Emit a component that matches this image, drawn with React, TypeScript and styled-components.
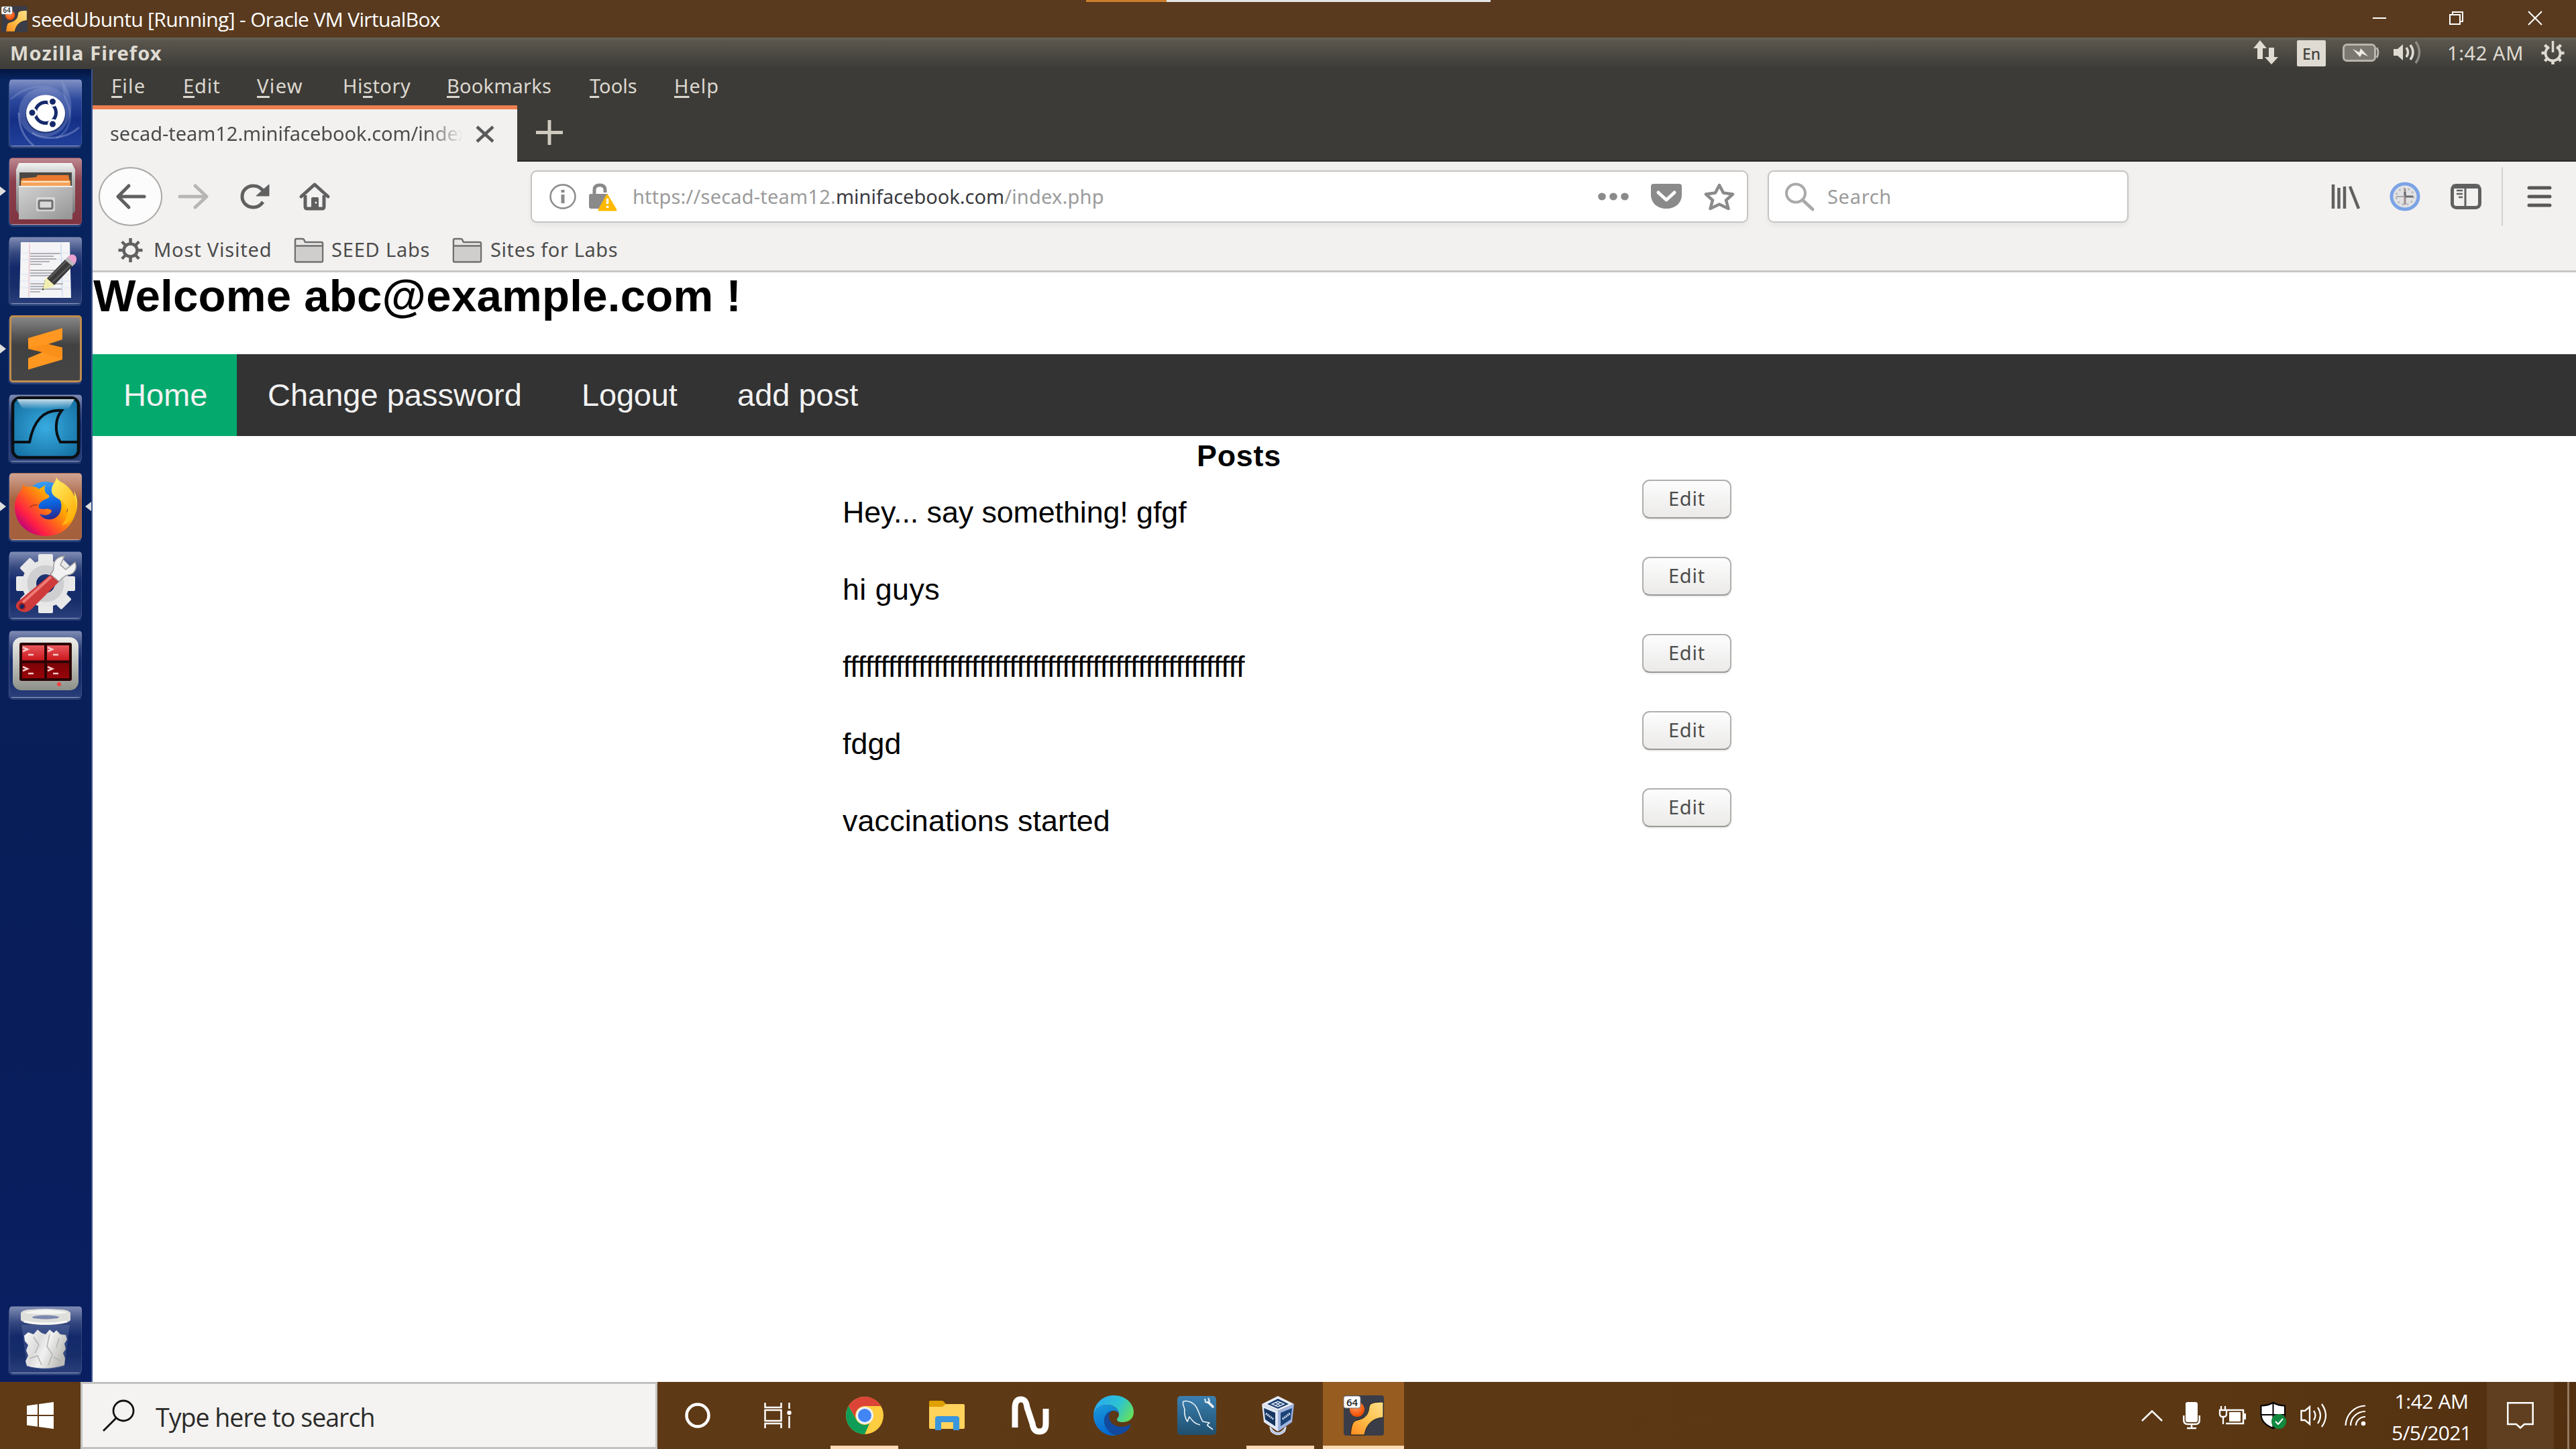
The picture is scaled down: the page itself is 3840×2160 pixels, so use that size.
import React from 'react';
import styled, { createGlobalStyle } from 'styled-components';

const uiFont = '"Noto Sans", "Open Sans", sans-serif';
const winFont = '"Open Sans", "Noto Sans", sans-serif';
const pageFont = '"Liberation Sans", Arial, sans-serif';

const GlobalStyle = createGlobalStyle`
  * { box-sizing: border-box; }
  body { margin: 0; background: #fff; overflow: hidden; }
  h1, ul, table { margin: 0; padding: 0; }
`;

const Screen = styled.div`
  width: 3840px;
  height: 2160px;
  display: flex;
  flex-direction: column;
  background: #fff;
`;

const Label = styled.span<{ $w?: number; $ls?: number; $ml?: number }>`
  flex: none;
  white-space: nowrap;
  ${p => (p.$w !== undefined ? `width: ${p.$w}px;` : '')}
  letter-spacing: ${p => p.$ls ?? 0}px;
  margin-left: ${p => p.$ml ?? 0}px;
`;

const Svg = styled.svg<{ $ml?: number }>`
  display: block;
  flex: none;
  overflow: visible;
  margin-left: ${p => p.$ml ?? 0}px;
`;

type IconProps = { w: number; h: number; ml?: number; children: React.ReactNode };
const Icon = ({ w, h, ml, children }: IconProps) => (
  <Svg width={w} height={h} viewBox={`0 0 ${w} ${h}`} $ml={ml} fill="none">
    {children}
  </Svg>
);

/* ---------- host window title bar ---------- */

const TitleBar = styled.header`
  position: relative;
  flex: none;
  height: 56px;
  display: flex;
  align-items: center;
  padding-left: 2px;
  background: #593a1e;
  color: #fff;
  font: 30px ${winFont};
`;

const TopMarker = styled.div`
  position: absolute;
  top: 0;
  left: 1619px;
  width: 603px;
  height: 3px;
  background: linear-gradient(90deg, #cb7f2b 120px, #e4e4e4 120px);
`;

const WindowControls = styled.div`
  margin-left: auto;
  display: flex;
  align-items: center;
  padding-right: 51px;
  padding-bottom: 2px;
`;

const BadgeText = styled.text`
  font-family: ${winFont};
  font-weight: 600;
`;

const MachineGlyph = ({ size, ml }: { size: number; ml?: number }) => (
  <Svg width={size} height={size} viewBox="0 0 60 60" $ml={ml} fill="none">
    <defs>
      <linearGradient id="yband" x1="0" y1="1" x2="1" y2="0">
        <stop offset="0" stopColor="#ff8a1c" />
        <stop offset="0.5" stopColor="#ffc14d" />
        <stop offset="1" stopColor="#ffe08a" />
      </linearGradient>
      <radialGradient id="yball" cx="0.4" cy="0.3" r="0.7">
        <stop offset="0" stopColor="#ff9a5c" />
        <stop offset="1" stopColor="#f04a00" />
      </radialGradient>
    </defs>
    <rect width="60" height="60" rx="4" fill="#3a3d47" />
    <circle cx="20" cy="21" r="11" fill="url(#yball)" />
    <path d="M10 59C12 46 12 39 20 37C34 34 37 27 38 17C39 11 46 10 59 10V33C45 34 34 41 31 59Z" fill="url(#yband)" stroke="#1d1d22" strokeWidth="1" />
    <rect x="0" y="1" width="25" height="18" rx="3" fill="#fff" stroke="#777" />
    <BadgeText x="4" y="16" fontSize="15" fill="#222">64</BadgeText>
  </Svg>
);

/* ---------- guest desktop ---------- */

const PanelBar = styled.div`
  flex: none;
  height: 47px;
  display: flex;
  align-items: center;
  padding: 0 16px 3px 15px;
  background: linear-gradient(#66635a, #5a564e 10%, #3f3e39 90%, #3c3b37);
  color: #dfdbd2;
  font: 29px ${uiFont};
`;

const PanelTitle = styled(Label)`
  font-weight: 700;
`;

const Indicators = styled.div`
  margin-left: auto;
  display: flex;
  align-items: center;
`;

const LangBadge = styled.span`
  width: 43px;
  height: 39px;
  margin: 3px 0 0 28px;
  display: flex;
  align-items: center;
  justify-content: center;
  background: #dfdbd2;
  color: #45433e;
  font-size: 23px;
  font-weight: 500;
  border-radius: 2px;
`;

const Desktop = styled.div`
  flex: none;
  height: 1957px;
  display: flex;
`;

const Launcher = styled.nav`
  flex: none;
  width: 138px;
  display: flex;
  flex-direction: column;
  gap: 17.4px;
  padding: 15px 0 13px;
  background: linear-gradient(#04143f, #082560 16px, #07205a 30%, #081d59 70%, #0a1f62);
  border-right: 2px solid #3d568f;
`;

const Slot = styled.div<{ $push?: boolean }>`
  flex: none;
  height: 100px;
  display: flex;
  align-items: center;
  margin-top: ${p => (p.$push ? 'auto' : '0')};
`;

const Tile = styled.div<{ $bg: string; $edge?: string }>`
  width: 108px;
  height: 100px;
  border-radius: 5px;
  background: ${p => p.$bg};
  border: ${p => (p.$edge ? `3px solid ${p.$edge}` : '1px solid rgba(255,255,255,.12)')};
  box-shadow: 0 4px 0 -1px rgba(170, 180, 220, .22), -4px 3px 0 -2px rgba(170, 180, 220, .14);
  display: flex;
  align-items: center;
  justify-content: center;
`;

const Gutter = styled.div<{ $w: number }>`
  flex: none;
  width: ${p => p.$w}px;
`;

const glass = 'linear-gradient(#7f8bb3, #34477f 24%, #13296a 45%, #172e6b 75%, #2a3f7a)';

const Art = ({ children }: { children: React.ReactNode }) => (
  <Svg width={108} height={100} viewBox="0 0 108 100" fill="none">{children}</Svg>
);

const UbuntuArt = () => (
  <Art>
    <path d="M2 30C30 5 70 5 84 30C98 55 88 80 70 88" stroke="#8fa3d8" strokeOpacity=".3" strokeWidth="3" />
    <path d="M78 2C102 32 92 62 78 76C48 100 14 78 14 50C14 22 40 8 60 14C84 20 86 40 84 52Z" fill="#a4b4e0" fillOpacity=".28" />
    <path d="M14 50C14 75 25 90 36 99M104 72C84 90 50 92 34 80" stroke="#a4b4e0" strokeOpacity=".4" strokeWidth="3" />
    <ellipse cx="54" cy="53" rx="30" ry="28" fill="#0d1f55" fillOpacity=".5" />
    <ellipse cx="54" cy="51" rx="29" ry="27.5" fill="#fff" />
    <circle cx="54" cy="50" r="15.500" stroke="#15296b" strokeWidth="5" />
    <g stroke="#fff" strokeWidth="3" fill="#15296b">
      <circle cx="34" cy="50" r="6" />
      <circle cx="64.500" cy="33.500" r="6" />
      <circle cx="64.500" cy="67" r="6" />
    </g>
  </Art>
);

const FilesArt = () => (
  <Art>
    <defs>
      <linearGradient id="cab" x1="0" y1="0" x2="0" y2="1">
        <stop offset="0" stopColor="#f3f3f3" />
        <stop offset="0.3" stopColor="#b9b9b9" />
        <stop offset="1" stopColor="#777" />
      </linearGradient>
      <linearGradient id="drawer" x1="0" y1="0" x2="1" y2="1">
        <stop offset="0" stopColor="#d2d2d2" />
        <stop offset="0.5" stopColor="#b4b4b4" />
        <stop offset="1" stopColor="#949494" />
      </linearGradient>
    </defs>
    <path d="M14 8H93L98 18V80L94 84H14L10 78V18Z" fill="url(#cab)" />
    <rect x="15" y="22" width="78" height="20" fill="#4b4844" />
    <path d="M18 31L40 29L42 26H88L91 42H17Z" fill="#e8792f" />
    <path d="M17 34H91V42H17Z" fill="#f5a35a" />
    <path d="M19 36H89" stroke="#fde3c4" strokeWidth="2" />
    <path d="M14 42H94V92H14Z" fill="url(#drawer)" />
    <path d="M14 43H94" stroke="#eee" strokeWidth="2" />
    <rect x="40" y="59" width="28" height="21" rx="2" fill="#dedede" fillOpacity=".8" />
    <rect x="44" y="64" width="20" height="12" rx="2" fill="#d8d8d8" stroke="#6e6e6e" strokeWidth="3" />
  </Art>
);

const EditorArt = () => (
  <Art>
    <path d="M17 8H90L92 91H15Z" fill="#f4f4f6" />
    <path d="M30 10L29 90" stroke="#eec3c8" strokeWidth="1.500" />
    <path d="M77 10L79 90" stroke="#cbdcf0" strokeWidth="1.500" />
    <path d="M18 24H90M18 34H90M17 56H90M17 66H90M16 76H90" stroke="#dbe4f2" strokeWidth="1" />
    <path d="M31 25H76M31 29H66M31 33H70M31 37H60M31 41H48M31 50H72M31 54H68M31 58H62M31 70H80M31 74H60M31 78H78M31 82H46" stroke="#b2b2b6" strokeWidth="2" />
    <path d="M49 80L53 64L62 72Z" fill="#22221c" />
    <path d="M53 64L57 60L69 71L63 75L52 78L50 77Z" fill="#f2eeb0" />
    <path d="M56 62L83 34L94 44L67 72Z" fill="#3a3a3a" />
    <path d="M59 62L86 35M64 68L91 42" stroke="#5e5e5e" strokeWidth="2" />
    <path d="M83 34L87 30L98 40L94 44Z" fill="#b8b8b8" />
    <path d="M87 30Q94 23 99 29Q102 35 97 41Z" fill="#eaa3d0" />
  </Art>
);

const SublimeArt = () => (
  <Art>
    <path d="M28 34L79 19V36L58 43L79 48V66L28 81V64L49 55L28 50Z" fill="#ff9720" />
    <path d="M58 43L79 48V66L49 55L28 50L34 48Z" fill="#f58a14" fillOpacity=".5" />
  </Art>
);

const SharkArt = () => (
  <Art>
    <defs>
      <radialGradient id="sea" cx="0.5" cy="0.5" r="0.6">
        <stop offset="0" stopColor="#38abe0" />
        <stop offset="1" stopColor="#1773a6" />
      </radialGradient>
      <linearGradient id="shine" x1="0" y1="0" x2="0" y2="1">
        <stop offset="0" stopColor="#fff" stopOpacity=".75" />
        <stop offset="1" stopColor="#fff" stopOpacity="0" />
      </linearGradient>
    </defs>
    <rect x="5" y="5" width="98" height="89" rx="11" fill="url(#sea)" stroke="#0a0f14" strokeWidth="4.500" />
    <path d="M11 7H97L88 22H20Z" fill="url(#shine)" />
    <path d="M5 71H30C36 40 50 22 78 24C68 36 67 56 76 71H103" stroke="#0a0f14" strokeWidth="4" />
  </Art>
);

const FirefoxArt = () => (
  <Art>
    <defs>
      <linearGradient id="fox" x1="0.95" y1="0.15" x2="0.1" y2="0.85">
        <stop offset="0" stopColor="#fff04a" />
        <stop offset="0.3" stopColor="#ffb300" />
        <stop offset="0.55" stopColor="#ff6a1a" />
        <stop offset="0.8" stopColor="#ff1f45" />
        <stop offset="1" stopColor="#b5007f" />
      </linearGradient>
      <linearGradient id="globe" x1="0.4" y1="0" x2="0.6" y2="1">
        <stop offset="0" stopColor="#3aa0f5" />
        <stop offset="0.55" stopColor="#0b62dd" />
        <stop offset="1" stopColor="#321a78" />
      </linearGradient>
      <linearGradient id="tail" x1="0" y1="0" x2="0.6" y2="1">
        <stop offset="0" stopColor="#fff36b" />
        <stop offset="1" stopColor="#ffb10a" />
      </linearGradient>
    </defs>
    <ellipse cx="54" cy="44" rx="32" ry="31" fill="url(#globe)" />
    <path d="M21 16C22 20 25 21 30 21C37 19 42 22 44 24L54 18C51 24 53 28 55 31C62 34 60 37 54 39C48 42 42 46 44 52C50 57 56 50 63 56C62 62 54 65 45 61C52 74 74 72 77 54C79 44 75 38 70 32C88 34 90 48 84 60C94 50 100 38 96 26C102 36 103 50 98 62C91 83 75 94 54 94C28 94 7 76 8 48C9 36 15 29 18 24Z" fill="url(#fox)" />
    <path d="M70 6C70 14 62 17 63 28C65 38 78 38 86 50C90 60 84 70 78 78C92 76 100 62 100 48C99 30 86 18 78 14C73 11 71 9 70 6Z" fill="url(#tail)" />
    <path d="M30 52C33 48 37 47 42 48" stroke="#c33e1a" strokeWidth="2" />
  </Art>
);

const cogTeeth = [0, 45, 90, 135, 180, 225, 270, 315];

const ToolsArt = () => (
  <Art>
    <g fill="#e9e9ea">
      {cogTeeth.map(a => (
        <rect key={a} x="43" y="4" width="22" height="20" rx="2" transform={`rotate(${a} 54 48)`} />
      ))}
    </g>
    <circle cx="54" cy="48" r="24.500" stroke="#e6e6e7" strokeWidth="21" />
    <circle cx="54" cy="48" r="21" stroke="#cfcfd1" strokeWidth="13" />
    <path d="M62 34L74 45L34 85C28 92 18 92 12 86C8 82 10 76 15 73Z" fill="#cf3a3a" />
    <path d="M62 38L20 76" stroke="#ee7b76" strokeWidth="4" />
    <circle cx="19" cy="82" r="4" fill="#15256a" stroke="#8d2020" strokeWidth="2" />
    <path d="M61 34C66 30 66 26 66 20C67 12 74 7 82 7L76 20L84 27L98 16C102 26 96 34 88 35C82 36 78 40 74 45Z" fill="#f2f2f2" stroke="#9b9b9b" strokeWidth="1.500" />
  </Art>
);

const TerminatorArt = () => (
  <Art>
    <defs>
      <linearGradient id="bezel" x1="0" y1="0" x2="0" y2="1">
        <stop offset="0" stopColor="#efefeb" />
        <stop offset="1" stopColor="#8d9088" />
      </linearGradient>
      <linearGradient id="red" x1="0" y1="0" x2="0" y2="1">
        <stop offset="0" stopColor="#e8585c" />
        <stop offset="0.5" stopColor="#c81016" />
        <stop offset="0.55" stopColor="#7c0307" />
        <stop offset="1" stopColor="#980409" />
      </linearGradient>
    </defs>
    <rect x="5" y="10" width="98" height="79" rx="13" fill="url(#bezel)" />
    <rect x="15" y="18" width="78" height="57" rx="3" fill="#2b0506" />
    <rect x="19" y="22" width="70" height="49" fill="url(#red)" />
    <path d="M54 20V73M17 46.500H91" stroke="#2b0506" strokeWidth="4" />
    <path d="M20 25L27 28L20 31M28 36H36M57 25L64 28L57 31M65 36H73M20 54L27 57L20 60M28 64H36M57 54L64 57L57 60M65 64H73" stroke="#f6c9c9" strokeWidth="2.500" />
    <circle cx="74" cy="80" r="3" fill="#f2403c" />
  </Art>
);

const TrashArt = () => (
  <Art>
    <defs>
      <linearGradient id="paper" x1="0" y1="0" x2="1" y2="0.4">
        <stop offset="0" stopColor="#fafafa" />
        <stop offset="0.4" stopColor="#dcdcdc" />
        <stop offset="0.6" stopColor="#f1f1f1" />
        <stop offset="1" stopColor="#bdbdb9" />
      </linearGradient>
    </defs>
    <path d="M18 28H90L82 90Q54 98 26 90Z" fill="#8c9bc8" fillOpacity=".25" />
    <path d="M22 44L28 39L36 42L42 35L48 40L54 42L60 35L66 40L70 36L76 42L84 43L86 50L82 56L84 64L80 70L83 78L82 88Q54 97 26 89L24 82L28 74L25 66L28 58L23 52Z" fill="url(#paper)" />
    <path d="M36 46L44 58L38 70M60 42L56 60L64 72L58 88M74 48L70 62M30 78L42 74L48 88M66 76L76 82" stroke="#b3b3b0" strokeWidth="1.500" />
    <path d="M17 10Q20 5 34 5Q54 3 74 5Q88 5 91 10V21Q84 28 54 28Q24 28 17 21Z" fill="#dededb" />
    <path d="M22 9Q54 2 86 9Q84 12 54 12Q24 12 22 9Z" fill="#f4f4f2" />
    <ellipse cx="54" cy="16.500" rx="20" ry="3" fill="#7d88b0" />
    <path d="M22 23Q54 29 86 23" stroke="#f7f7f5" strokeWidth="3" />
  </Art>
);

const LeftPip = () => (
  <Icon w={14} h={16}><path d="M0 1L9 8L0 15Z" fill="#dedede" /></Icon>
);
const RightPip = () => (
  <Icon w={9} h={16} ml={5}><path d="M9 1L0 8L9 15Z" fill="#dedede" /></Icon>
);

type LauncherApp = { name: string; bg: string; edge?: string; art: React.ReactNode; running?: boolean; focused?: boolean; bottom?: boolean };
const launcherApps: LauncherApp[] = [
  { name: 'dash', bg: 'linear-gradient(#7f90c4, #2c489c 30%, #142f85 60%, #21409a)', art: <UbuntuArt /> },
  { name: 'files', bg: 'linear-gradient(#bd8790, #8a3f4d 35%, #7f3441)', art: <FilesArt />, running: true },
  { name: 'gedit', bg: glass, art: <EditorArt /> },
  { name: 'sublime', bg: 'linear-gradient(#868686, #545454 30%, #414141 45%, #454545)', edge: '#c08d4e', art: <SublimeArt />, running: true },
  { name: 'wireshark', bg: glass, art: <SharkArt /> },
  { name: 'firefox', bg: 'linear-gradient(#cfa392, #a7623f 40%, #a4603c)', art: <FirefoxArt />, running: true, focused: true },
  { name: 'settings', bg: glass, art: <ToolsArt /> },
  { name: 'terminator', bg: glass, art: <TerminatorArt /> },
  { name: 'trash', bg: glass, art: <TrashArt />, bottom: true },
];

/* ---------- Firefox chrome ---------- */

const Browser = styled.div`
  flex: 1;
  min-width: 0;
  display: flex;
  flex-direction: column;
  background: #3c3b37;
  font: 29px ${uiFont};
`;

const MenuBar = styled.div`
  flex: none;
  height: 54px;
  display: flex;
  align-items: center;
  padding: 0 0 4px 28px;
  color: #dcd8cf;
`;

const MenuItem = styled(Label)`
  line-height: 1.2;
`;

const Mnemonic = styled.span`
  text-decoration: underline;
  text-decoration-thickness: 2.500px;
  text-underline-offset: 4px;
`;

const TabStrip = styled.div`
  flex: none;
  height: 84px;
  display: flex;
  align-items: center;
  border-bottom: 2px solid #2b2a27;
`;

const Tab = styled.div`
  height: 84px;
  align-self: flex-start;
  width: 633px;
  display: flex;
  align-items: center;
  padding: 0 34px 4px 26px;
  background: #f2f1f0;
  border-top: 6px solid #ee7f50;
  color: #4c4c4c;
`;

const TabTitle = styled.span`
  flex: none;
  width: 528px;
  padding-bottom: 3px;
  white-space: nowrap;
  letter-spacing: -.05px;
  -webkit-mask-image: linear-gradient(90deg, #000 470px, transparent 526px);
  mask-image: linear-gradient(90deg, #000 470px, transparent 526px);
`;

const NavBar = styled.div`
  flex: none;
  height: 104px;
  display: flex;
  align-items: center;
  padding-left: 9px;
  background: #f2f1f0;
`;

const BackButton = styled.div`
  width: 95px;
  height: 88px;
  border-radius: 50%;
  border: 2px solid #a9a8a6;
  background: #fcfcfc;
  display: flex;
  align-items: center;
  justify-content: center;
`;

const Field = styled.div<{ $w: number; $ml: number; $pl: number }>`
  flex: none;
  width: ${p => p.$w}px;
  height: 78px;
  margin-left: ${p => p.$ml}px;
  padding-left: ${p => p.$pl}px;
  display: flex;
  align-items: center;
  background: #fff;
  border: 2px solid #c6c4c2;
  border-radius: 9px;
  box-shadow: 0 4px 8px rgba(0, 0, 0, .05);
  color: #9b9b9b;
`;

const FieldText = styled(Label)`
  padding-bottom: 2px;
`;

const Host = styled.span`
  color: #3a3a40;
  letter-spacing: 0;
`;

const Divider = styled.div`
  width: 2px;
  height: 88px;
  margin-left: 30px;
  background: #d4d3d1;
`;

const BookmarksBar = styled.div`
  flex: none;
  height: 61px;
  display: flex;
  align-items: center;
  padding: 0 0 2px 37px;
  background: #f2f1f0;
  border-bottom: 3px solid #c9c7c5;
  color: #4c4c4c;
`;

const BookmarkText = styled(Label)`
  padding-bottom: 4px;
`;

const FolderIcon = ({ ml }: { ml: number }) => (
  <Icon w={45} h={38} ml={ml}>
    <path d="M2 35V4Q2 2 4 2H13Q15 2 16 5L17 7H41Q43 7 43 9V35Q43 36.500 41 36.500H4Q2 36.500 2 35Z" fill="#e8e7e6" stroke="#6f6f6f" strokeWidth="2.500" />
    <path d="M3 13H42V35H3Z" fill="#cfcecd" />
    <path d="M3 12.500H42" stroke="#6f6f6f" strokeWidth="2.500" />
  </Icon>
);

/* ---------- web page ---------- */

const Page = styled.main`
  flex: 1;
  min-height: 0;
  background: #fff;
  color: #000;
  font: 44.800px ${pageFont};
`;

const Welcome = styled.h1`
  height: 122px;
  line-height: 69px;
  font-size: 67.200px;
  font-weight: 700;
  padding-left: 1px;
  letter-spacing: .22px;
  white-space: nowrap;
`;

const TopNav = styled.div`
  height: 122px;
  display: flex;
  background: #333;
`;

const NavLink = styled.a<{ $w: number; $active?: boolean; $ls?: number }>`
  width: ${p => p.$w}px;
  padding-left: 46px;
  line-height: 121px;
  font-size: 47px;
  letter-spacing: ${p => p.$ls ?? 0}px;
  white-space: nowrap;
  color: #f2f2f2;
  background: ${p => (p.$active ? '#04aa6d' : 'transparent')};
`;

const Posts = styled.section`
  width: 1325px;
  margin-left: 1118px;
  padding-top: 1px;
`;

const PostsHeading = styled.div`
  width: 1182px;
  height: 64px;
  line-height: 56px;
  font-weight: 700;
  letter-spacing: .800px;
  text-align: center;
`;

const PostRow = styled.div`
  height: 114.900px;
  display: flex;
  justify-content: space-between;
`;

const PostText = styled.div<{ $ls: number }>`
  padding-top: 23px;
  line-height: 50px;
  letter-spacing: ${p => p.$ls}px;
`;

const EditButton = styled.button`
  width: 133px;
  height: 58px;
  padding: 0 0 3px;
  border: 2px solid #b1afac;
  border-bottom-color: #9b9996;
  border-radius: 11px;
  background: linear-gradient(#fdfdfd, #ebeae9);
  box-shadow: 0 2px 2px rgba(0, 0, 0, .08);
  color: #4c4c4c;
  font: 29px ${uiFont};
  letter-spacing: .8px;
`;

const posts = [
  { text: 'Hey... say something! gfgf', ls: -0.08 },
  { text: 'hi guys', ls: 0.45 },
  { text: 'f'.repeat(53), ls: -0.35 },
  { text: 'fdgd', ls: 0.1 },
  { text: 'vaccinations started', ls: 0.15 },
];

/* ---------- host taskbar ---------- */

const Taskbar = styled.footer`
  flex: none;
  height: 100px;
  display: flex;
  align-items: center;
  background: linear-gradient(90deg, #603a15, #5c3815 60%, #5b3713 85%, #523010);
  color: #fff;
  font: 30px ${winFont};
`;

const StartCell = styled.div`
  flex: none;
  width: 120px;
  display: flex;
  justify-content: center;
`;

const SearchBox = styled.div`
  flex: none;
  width: 860px;
  height: 100px;
  display: flex;
  align-items: center;
  padding-left: 29px;
  background: #f4f3f1;
  border: 3px solid #c3c2c0;
  color: #2b2b2b;
  font-size: 37.500px;
`;

const SearchText = styled(Label)`
  padding-top: 4px;
`;

const TaskCell = styled.div<{ $w?: number; $shift?: number; $state?: 'open' | 'active' }>`
  flex: none;
  width: ${p => p.$w ?? 121}px;
  height: 100px;
  display: flex;
  align-items: center;
  justify-content: center;
  padding-right: ${p => p.$shift ?? 0}px;
  background: ${p =>
    p.$state === 'active'
      ? 'linear-gradient(#965c20 95px, #ffd9b3 95px)'
      : p.$state === 'open'
        ? 'linear-gradient(#ffd9b3, #ffd9b3) center bottom / 101px 5px no-repeat'
        : 'transparent'};
`;

const Tray = styled.div`
  margin-left: auto;
  display: flex;
  align-items: center;
  height: 100px;
`;

const Clock = styled.div`
  width: 123px;
  margin-left: 36px;
  padding-top: 3px;
  display: flex;
  flex-direction: column;
  align-items: center;
  line-height: 47px;
  white-space: nowrap;
`;

const ActionCenter = styled.div`
  width: 100px;
  height: 100px;
  margin-left: 21px;
  display: flex;
  align-items: center;
  justify-content: center;
  background: #603f20;
`;

const ShowDesktop = styled.div`
  width: 13px;
  height: 100px;
  margin-left: 20px;
  border-left: 3px solid #937960;
`;

const BrowserMenu = () => (
  <MenuBar>
    <MenuItem $w={107} $ls={1.2}><Mnemonic>F</Mnemonic>ile</MenuItem>
    <MenuItem $w={110} $ls={0.9}><Mnemonic>E</Mnemonic>dit</MenuItem>
    <MenuItem $w={128} $ls={1.4}><Mnemonic>V</Mnemonic>iew</MenuItem>
    <MenuItem $w={155} $ls={0.5}>Hi<Mnemonic>s</Mnemonic>tory</MenuItem>
    <MenuItem $w={213} $ls={0.2}><Mnemonic>B</Mnemonic>ookmarks</MenuItem>
    <MenuItem $w={126} $ls={0}><Mnemonic>T</Mnemonic>ools</MenuItem>
    <MenuItem $ls={1}><Mnemonic>H</Mnemonic>elp</MenuItem>
  </MenuBar>
);

const BrowserNav = () => (
  <NavBar>
    <BackButton>
      <Icon w={46} h={38}><path d="M43 19H4M20 3L4 19L20 35" stroke="#606060" strokeWidth="5" strokeLinecap="round" strokeLinejoin="round" /></Icon>
    </BackButton>
    <Icon w={46} h={38} ml={24}><path d="M2 19H41M25 3L42 19L25 35" stroke="#b7b6b5" strokeWidth="5" strokeLinecap="round" strokeLinejoin="round" /></Icon>
    <Icon w={44} h={38} ml={46}>
      <path d="M34 27C30 33 26 35 20 35C10 35 3 28 3 19C3 10 10 3 20 3C28 3 33 8 36 13" stroke="#606060" strokeWidth="5" />
      <path d="M43 1V18H24Z" fill="#606060" stroke="#606060" strokeLinejoin="round" />
    </Icon>
    <Icon w={46} h={42} ml={44}>
      <path d="M3 21L23 3L43 21" stroke="#606060" strokeWidth="5" strokeLinecap="round" strokeLinejoin="round" />
      <path d="M9 19V36Q9 39 12 39H34Q37 39 37 36V19" stroke="#606060" strokeWidth="5" />
      <path d="M18 38V24Q18 22 20 22H27Q29 22 29 24V38Z" fill="#606060" />
      <circle cx="25" cy="30" r="1.500" fill="#f2f1f0" />
    </Icon>
    <Field $w={1815} $ml={299} $pl={26}>
      <Icon w={40} h={38}>
        <ellipse cx="20" cy="19" rx="18.500" ry="17.500" stroke="#8a8a8a" strokeWidth="2.500" />
        <path d="M20 16V29M20 9V13" stroke="#8a8a8a" strokeWidth="5" />
      </Icon>
      <Icon w={41} h={42} ml={19}>
        <path d="M8 18V11C8 6 11 4 16 4C21 4 24 6 24 11V15" stroke="#8a8a8a" strokeWidth="5" />
        <path d="M0 20Q0 17 3 17H28L20 39H3Q0 39 0 36Z" fill="#8a8a8a" />
        <path d="M27 19L40 41H15Z" fill="#ffb900" stroke="#ffb900" strokeWidth="3" strokeLinejoin="round" />
        <path d="M27.500 24V32M27.500 35V38" stroke="#fff" strokeWidth="3.500" />
      </Icon>
      <FieldText $ml={24} $w={1439} $ls={0.2}>https://secad-team12.<Host>minifacebook.com</Host>/index.php</FieldText>
      <Icon w={204} h={42}>
        <g fill="#8a8a8a">
          <ellipse cx="6" cy="21" rx="5.800" ry="5.500" />
          <ellipse cx="23" cy="21" rx="5.800" ry="5.500" />
          <ellipse cx="40" cy="21" rx="5.800" ry="5.500" />
          <path d="M79 6Q79 2 83 2H121Q125 2 125 6V18C125 31 115 39 102 39C89 39 79 31 79 18Z" />
        </g>
        <path d="M90 15L102 26L114 15" stroke="#fff" strokeWidth="5" strokeLinecap="round" strokeLinejoin="round" />
        <path d="M181 4L187 15.500L201 17.500L191 26.500L194.500 39L181 32.500L167.500 39L171 26.500L161 17.500L175 15.500Z" stroke="#8a8a8a" strokeWidth="4.500" strokeLinejoin="round" />
      </Icon>
    </Field>
    <Field $w={538} $ml={29} $pl={23}>
      <Icon w={45} h={42}>
        <ellipse cx="17" cy="16" rx="14" ry="13.500" stroke="#a9a9a9" strokeWidth="4" />
        <path d="M27 26L42 40" stroke="#a9a9a9" strokeWidth="5" strokeLinecap="round" />
      </Icon>
      <FieldText $ml={19} $ls={0.7}>Search</FieldText>
    </Field>
    <Icon w={44} h={38} ml={302}>
      <path d="M3 1V37M11.500 6V37M20 4V37" stroke="#606060" strokeWidth="4.500" />
      <path d="M28 4L41 37" stroke="#606060" strokeWidth="4.500" />
    </Icon>
    <Icon w={46} h={42} ml={43}>
      <ellipse cx="23" cy="21" rx="20" ry="19" fill="#e2e2e4" stroke="#7ba3e6" strokeWidth="5" />
      <ellipse cx="23" cy="21" rx="13" ry="12" stroke="#bdbdbd" strokeWidth="3" strokeDasharray="3 4" />
      <path d="M23 9V33" stroke="#a08a8a" strokeWidth="3" />
      <path d="M23 14V21H35" stroke="#6b6c72" strokeWidth="3" />
      <path d="M10 21H23" stroke="#aaa" strokeWidth="2" />
    </Icon>
    <Icon w={46} h={38} ml={45}>
      <rect x="2.500" y="2.500" width="41" height="33" rx="6" stroke="#606060" strokeWidth="5" />
      <path d="M3 4H43" stroke="#606060" strokeWidth="6" />
      <path d="M22 4V35" stroke="#606060" strokeWidth="3" />
      <path d="M9 10H18M9 15H18M12 20H18" stroke="#606060" strokeWidth="2.500" />
    </Icon>
    <Divider />
    <Icon w={35} h={34} ml={37}>
      <path d="M2 4H33M2 17H33M2 30H33" stroke="#585858" strokeWidth="5" strokeLinecap="round" />
    </Icon>
  </NavBar>
);

const Bookmarks = () => (
  <BookmarksBar>
    <Icon w={39} h={38}>
      <ellipse cx="19.500" cy="19" rx="10" ry="9.500" stroke="#606060" strokeWidth="4.500" />
      {cogTeeth.map(a => (
        <path key={a} d="M19.500 1V8" stroke="#606060" strokeWidth="4.500" transform={`rotate(${a} 19.500 19)`} />
      ))}
    </Icon>
    <BookmarkText $ml={15} $w={191} $ls={0.8}>Most Visited</BookmarkText>
    <FolderIcon ml={18} />
    <BookmarkText $ml={11} $w={160} $ls={0.8}>SEED Labs</BookmarkText>
    <FolderIcon ml={20} />
    <BookmarkText $ml={12} $ls={0.6}>Sites for Labs</BookmarkText>
  </BookmarksBar>
);

const ChromeGlyph = () => (
  <Icon w={56} h={56}>
    <circle cx="28" cy="28" r="28" fill="#ffcd40" />
    <path d="M3.800 14A28 28 0 0 1 52.200 14H28A14 14 0 0 0 15.900 35Z" fill="#db4437" />
    <path d="M3.800 14L15.900 35A14 14 0 0 0 35 40L28 56A28 28 0 0 1 3.800 14Z" fill="#0f9d58" />
    <circle cx="28" cy="28" r="13" fill="#f1f1f1" />
    <circle cx="28" cy="28" r="10" fill="#4285f4" />
  </Icon>
);

const ExplorerGlyph = () => (
  <Icon w={54} h={46}>
    <path d="M0 3Q0 1 2 1H19Q21 1 22 2.500L25 6V12H0Z" fill="#dfa000" />
    <path d="M0 10H20L25 6H51Q53 6 53 8V41Q53 43 51 43H2Q0 43 0 41Z" fill="#ffd35c" />
    <path d="M9 45V28Q9 24 13 24H41Q45 24 45 28V45H36V33H18V45Z" fill="#3a96dd" />
  </Icon>
);

const EdgeGlyph = () => (
  <Icon w={60} h={60}>
    <defs>
      <linearGradient id="edgeTop" x1="0" y1="0.3" x2="1" y2="0.7">
        <stop offset="0" stopColor="#2aa9f0" />
        <stop offset="0.55" stopColor="#2bc3d2" />
        <stop offset="1" stopColor="#68e05a" />
      </linearGradient>
      <linearGradient id="edgeBody" x1="0" y1="0" x2="0.3" y2="1">
        <stop offset="0" stopColor="#1a9bdc" />
        <stop offset="1" stopColor="#0469d0" />
      </linearGradient>
    </defs>
    <path d="M0 29C1 12 14 0 30 0C48 0 60 12 60 25C60 35 52 40 44 40C37 40 35 38 35 36C35 34 38 33 38 28C38 20 30 14 20 14C9 14 2 21 0 29Z" fill="url(#edgeTop)" />
    <path d="M0 29C2 20 10 14 20 14C30 14 37 20 38 27C35 23 31 22 28 23C20 24 16 32 16 38C17 50 27 59 34 60C17 62 0 49 0 29Z" fill="url(#edgeBody)" />
    <path d="M28 23C20 24 15 32 16 39C17 50 26 60 36 59C45 58 52 52 55 46C56 44 55 43 53 44C50 46 46 47 42 47C31 47 23 40 23 31C23 28 25 25 28 23Z" fill="#114a9e" />
  </Icon>
);

const MysqlGlyph = () => (
  <Icon w={58} h={58}>
    <defs>
      <linearGradient id="wb" x1="0" y1="0" x2="0" y2="1">
        <stop offset="0" stopColor="#3b80b0" />
        <stop offset="1" stopColor="#1f4f6e" />
      </linearGradient>
    </defs>
    <rect width="58" height="58" rx="5" fill="url(#wb)" />
    <path d="M9 8C16 6 24 10 28 16C32 22 34 32 38 38L48 40C46 42 44 42 45 44L53 50M9 8C7 11 10 16 11 20C10 26 12 34 15 38C17 36 16 33 18 31C22 36 26 42 34 43" stroke="#e9f1f6" strokeWidth="1.600" strokeLinejoin="round" />
    <path d="M46 9L53 16" stroke="#e9f1f6" strokeWidth="3.500" strokeLinecap="round" />
    <path d="M41 4L42 9L46 10L48 7L46 3" stroke="#e9f1f6" strokeWidth="2" />
  </Icon>
);

const BoxGlyph = () => (
  <Icon w={50} h={58}>
    <path d="M13 46Q25 64 37 46L35 53Q25 62 15 53Z" fill="#8fa6d8" stroke="#dfe6f5" strokeWidth="1.500" />
    <path d="M25 0L49 12L25 22L1 12Z" fill="#e8eef8" />
    <path d="M25 4L41 12L25 19L9 12Z" fill="#173a6b" />
    <path d="M16 12L25 8L34 12L25 16ZM21 9L29 15M29 9L21 15" stroke="#dbe6f5" strokeWidth="1.500" />
    <path d="M1 12L25 22V53L4 39Z" fill="#e1e8f5" />
    <path d="M49 12L25 22V53L46 39Z" fill="#9fb4e0" />
    <path d="M4 18L21 25V45L6 35Z" fill="#16355f" />
    <path d="M46 18L29 25V45L44 35Z" fill="#1c4478" />
    <path d="M7 26L19 35M43 26L31 35" stroke="#cfdcf0" strokeWidth="3" strokeDasharray="2 1" />
  </Icon>
);

const HostTaskbar = () => (
  <Taskbar>
    <StartCell>
      <Icon w={40} h={40}>
        <path d="M0 5.600L16 3.300V19H0ZM18 3L40 0V19H18ZM0 21H16V36.700L0 34.400ZM18 21H40V40L18 37Z" fill="#fff" />
      </Icon>
    </StartCell>
    <SearchBox>
      <Icon w={50} h={48}>
        <circle cx="32" cy="17" r="15" stroke="#111" strokeWidth="2.800" />
        <path d="M21 28L2 47" stroke="#111" strokeWidth="2.800" />
      </Icon>
      <SearchText $ml={30} $ls={-0.98}>Type here to search</SearchText>
    </SearchBox>
    <TaskCell $w={120}>
      <Icon w={40} h={40}><circle cx="20" cy="20" r="16.500" stroke="#fff" strokeWidth="4.500" /></Icon>
    </TaskCell>
    <TaskCell $w={118}>
      <Icon w={40} h={38}>
        <path d="M1.500 0V7H25.500V0M1.500 11H25.500V27H1.500ZM1.500 38V31H25.500V38M37.500 0V9M37.500 20V38" stroke="#fff" strokeWidth="2.500" />
        <circle cx="37.500" cy="15" r="3.200" fill="#fff" />
      </Icon>
    </TaskCell>
    <TaskCell $w={141} $state="open"><ChromeGlyph /></TaskCell>
    <TaskCell $w={105}><ExplorerGlyph /></TaskCell>
    <TaskCell $w={144}>
      <Icon w={56} h={56}>
        <path d="M5 46V17C5 8 8 4 14 4C20 4 22 8 23 16L31 40C32 48 35 52 41 52C48 52 51 48 51 40V18" stroke="#fff" strokeWidth="9" />
      </Icon>
    </TaskCell>
    <TaskCell $w={104}><EdgeGlyph /></TaskCell>
    <TaskCell $w={144}><MysqlGlyph /></TaskCell>
    <TaskCell $w={105} $state="open" $shift={8}><BoxGlyph /></TaskCell>
    <TaskCell $w={11} />
    <TaskCell $w={121} $state="active"><MachineGlyph size={60} /></TaskCell>
    <Tray>
      <Icon w={32} h={17}><path d="M1 16L16 1.500L31 16" stroke="#fff" strokeWidth="2.500" /></Icon>
      <Icon w={26} h={40} ml={30}>
        <rect x="4" y="0" width="18" height="30" rx="3" fill="#fff" />
        <path d="M1.300 20V27Q1.300 33 7 33H19Q24.700 33 24.700 27V20M13 33V39M6 39H20" stroke="#fff" strokeWidth="2.500" />
      </Icon>
      <Icon w={40} h={28} ml={28}>
        <path d="M12 6H36V26H10" stroke="#fff" strokeWidth="2.500" />
        <rect x="15" y="9" width="17" height="14" fill="#fff" />
        <path d="M38 11V20" stroke="#fff" strokeWidth="4" />
        <path d="M3 0V6M9 0V6M1 6H11V12Q11 15 8 16H4Q1 15 1 12ZM6 16V27" stroke="#fff" strokeWidth="2.300" />
      </Icon>
      <Icon w={40} h={40} ml={21}>
        <path d="M19.500 1C25 4 31 5.500 37 5.500V18C37 28 30 35 19.500 39C9 35 1.500 28 1.500 18V5.500C8 5.500 14 4 19.500 1Z" fill="#fff" stroke="#000" strokeWidth="2" />
        <path d="M19.500 1V38M2 19H37" stroke="#000" strokeWidth="2" />
        <circle cx="28" cy="29" r="11" fill="#10893e" />
        <path d="M23 29L27 33L34 25" stroke="#fff" strokeWidth="2" />
      </Icon>
      <Icon w={42} h={38} ml={20}>
        <path d="M1.500 12V26H7L14 32V6L7 12Z" stroke="#fff" strokeWidth="2.400" />
        <path d="M20 12Q25 19 20 26M26 7Q34 19 26 31M32 2Q44 19 32 36" stroke="#fff" strokeWidth="2.200" />
      </Icon>
      <Icon w={32} h={32} ml={24}>
        <path d="M1.500 31C2 15 14 2 31 1.500M9 31C9 19 19 10 31 10M17 31C17 24 23 18 31 18" stroke="#fff" strokeWidth="2.200" />
        <circle cx="28" cy="28" r="3.300" fill="#fff" />
      </Icon>
      <Clock>
        <Label $ls={-0.44}>1:42 AM</Label>
        <Label $ls={-0.74}>5/5/2021</Label>
      </Clock>
      <ActionCenter>
        <Icon w={40} h={40}>
          <path d="M1.300 1.300H38.700V33H26L20 38.500L14 33H1.300Z" stroke="#fff" strokeWidth="2.500" />
        </Icon>
      </ActionCenter>
      <ShowDesktop />
    </Tray>
  </Taskbar>
);

export default function App() {
  return (
    <Screen>
      <GlobalStyle />
      <TitleBar>
        <TopMarker />
        <MachineGlyph size={39} />
        <Label $ml={6} $ls={-0.65}>seedUbuntu [Running] - Oracle VM VirtualBox</Label>
        <WindowControls>
          <Icon w={20} h={20}><path d="M0 10H20" stroke="#fff" strokeWidth="2" /></Icon>
          <Icon w={22} h={20} ml={94}>
            <path d="M1 5H16V19H1ZM5 5V1H20V15H16" stroke="#fff" strokeWidth="2" />
          </Icon>
          <Icon w={20} h={20} ml={96}><path d="M0 0L20 20M20 0L0 20" stroke="#fff" strokeWidth="2" /></Icon>
        </WindowControls>
      </TitleBar>

      <PanelBar>
        <PanelTitle $ls={1.1}>Mozilla Firefox</PanelTitle>
        <Indicators>
          <Icon w={37} h={36}>
            <path d="M10 0L20 12H14V28H6V12H0Z" fill="#dfdbd2" />
            <path d="M27 36L37 25H31V11H23V25H17Z" fill="#dfdbd2" />
          </Icon>
          <LangBadge>En</LangBadge>
          <Icon w={55} h={27} ml={25}>
            <rect x="1.500" y="1.500" width="47" height="24" rx="5" fill="#7b7871" stroke="#b9b5ad" strokeWidth="3" />
            <path d="M51 6Q55 13 51 21" stroke="#b9b5ad" strokeWidth="3" />
            <path d="M15 8L25 13L27 7L38 19L29 15L26 20Z" fill="#efece5" />
          </Icon>
          <Icon w={44} h={36} ml={21}>
            <path d="M0 13H6L14 6V30L6 23H0Z" fill="#dfdbd2" />
            <path d="M19 11Q24 18 19 25M25 7Q33 18 25 29" stroke="#dfdbd2" strokeWidth="3.500" />
            <path d="M33 2Q44 18 33 34" stroke="#8d8a83" strokeWidth="3.500" />
          </Icon>
          <Label $ml={36} $w={117} $ls={0.6}>1:42 AM</Label>
          <Icon w={37} h={36} ml={22}>
            <path d="M13 10A11 11 0 1 0 24 10" stroke="#dfdbd2" strokeWidth="4" />
            {cogTeeth.filter(a => a !== 0).map(a => (
              <path key={a} d="M18.500 2V8" stroke="#dfdbd2" strokeWidth="4.500" transform={`rotate(${a} 18.500 19)`} />
            ))}
            <path d="M18.500 1V18" stroke="#dfdbd2" strokeWidth="3.500" />
          </Icon>
        </Indicators>
      </PanelBar>

      <Desktop>
        <Launcher>
          {launcherApps.map(a => (
            <Slot key={a.name} $push={a.bottom}>
              {a.running ? <LeftPip /> : <Gutter $w={14} />}
              <Tile $bg={a.bg} $edge={a.edge}>{a.art}</Tile>
              {a.focused && <RightPip />}
            </Slot>
          ))}
        </Launcher>

        <Browser>
          <BrowserMenu />
          <TabStrip>
            <Tab>
              <TabTitle>secad-team12.minifacebook.com/index</TabTitle>
              <Icon w={28} h={24} ml={17}><path d="M2 1L26 23M26 1L2 23" stroke="#5a5a5a" strokeWidth="4.500" /></Icon>
            </Tab>
            <Icon w={40} h={37} ml={28}><path d="M20 -1V36M0 17.500H40" stroke="#cfcabf" strokeWidth="5" /></Icon>
          </TabStrip>
          <BrowserNav />
          <Bookmarks />
          <Page>
            <Welcome>Welcome abc@example.com !</Welcome>
            <TopNav>
              <NavLink $w={215} $active>Home</NavLink>
              <NavLink $w={468}>Change password</NavLink>
              <NavLink $w={232} $ls={-0.2}>Logout</NavLink>
              <NavLink $w={272}>add post</NavLink>
            </TopNav>
            <Posts>
              <PostsHeading>Posts</PostsHeading>
              {posts.map(p => (
                <PostRow key={p.text}>
                  <PostText $ls={p.ls}>{p.text}</PostText>
                  <EditButton>Edit</EditButton>
                </PostRow>
              ))}
            </Posts>
          </Page>
        </Browser>
      </Desktop>

      <HostTaskbar />
    </Screen>
  );
}
